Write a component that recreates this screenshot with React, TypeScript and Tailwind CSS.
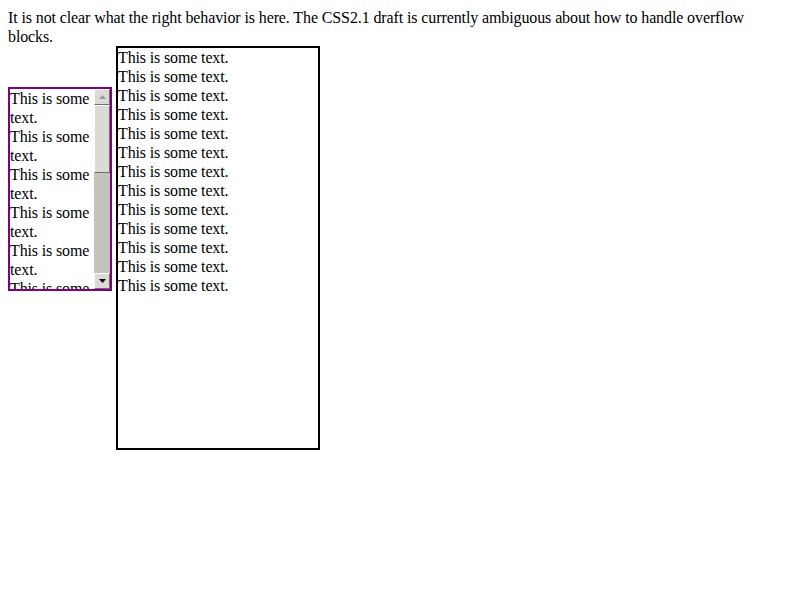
export default function App() {
  const lines = Array.from({ length: 13 }, (_, i) => i);

  return (
    <div className="min-h-[600px] bg-white p-2 text-[16px] leading-[19px] text-black" style={{ fontFamily: '"Liberation Serif", "Times New Roman", serif' }}>
      <p className="tracking-[-0.11px]">
        It is not clear what the right behavior is here. The CSS2.1 draft is currently ambiguous about how to handle overflow blocks.
      </p>

      <div className="flex items-start gap-1 tracking-[-0.14px]">
        {/* Scrolling box */}
        <div className="mt-[41px] flex h-[204px] w-[104px] border-2 border-[#800080]">
          <div className="h-[200px] w-[84px] overflow-hidden">
            {lines.map(i => (
              <div key={i}>This is some text.</div>
            ))}
          </div>
          <div className="flex h-[200px] w-4 flex-col bg-[#c4c2bd]">
            <div className="flex h-4 w-4 items-center justify-center border border-t-white border-l-white border-r-[#6f6d69] border-b-[#6f6d69] bg-[#dcdad5]">
              <svg width="7" height="4" viewBox="0 0 7 4">
                <polygon points="3.5,0 7,4 0,4" fill="#9a9893" />
              </svg>
            </div>
            <div className="h-[68px] w-4 border border-t-white border-l-white border-r-[#6f6d69] border-b-[#6f6d69] bg-[#dcdad5]" />
            <div className="flex-1" />
            <div className="flex h-4 w-4 items-center justify-center border border-t-white border-l-white border-r-[#6f6d69] border-b-[#6f6d69] bg-[#dcdad5]">
              <svg width="7" height="4" viewBox="0 0 7 4">
                <polygon points="0,0 7,0 3.5,4" fill="#000" />
              </svg>
            </div>
          </div>
        </div>

        {/* Tall box */}
        <div className="h-[404px] w-[204px] border-2 border-black">
          {lines.map(i => (
            <div key={i}>This is some text.</div>
          ))}
        </div>
      </div>
    </div>
  );
}
